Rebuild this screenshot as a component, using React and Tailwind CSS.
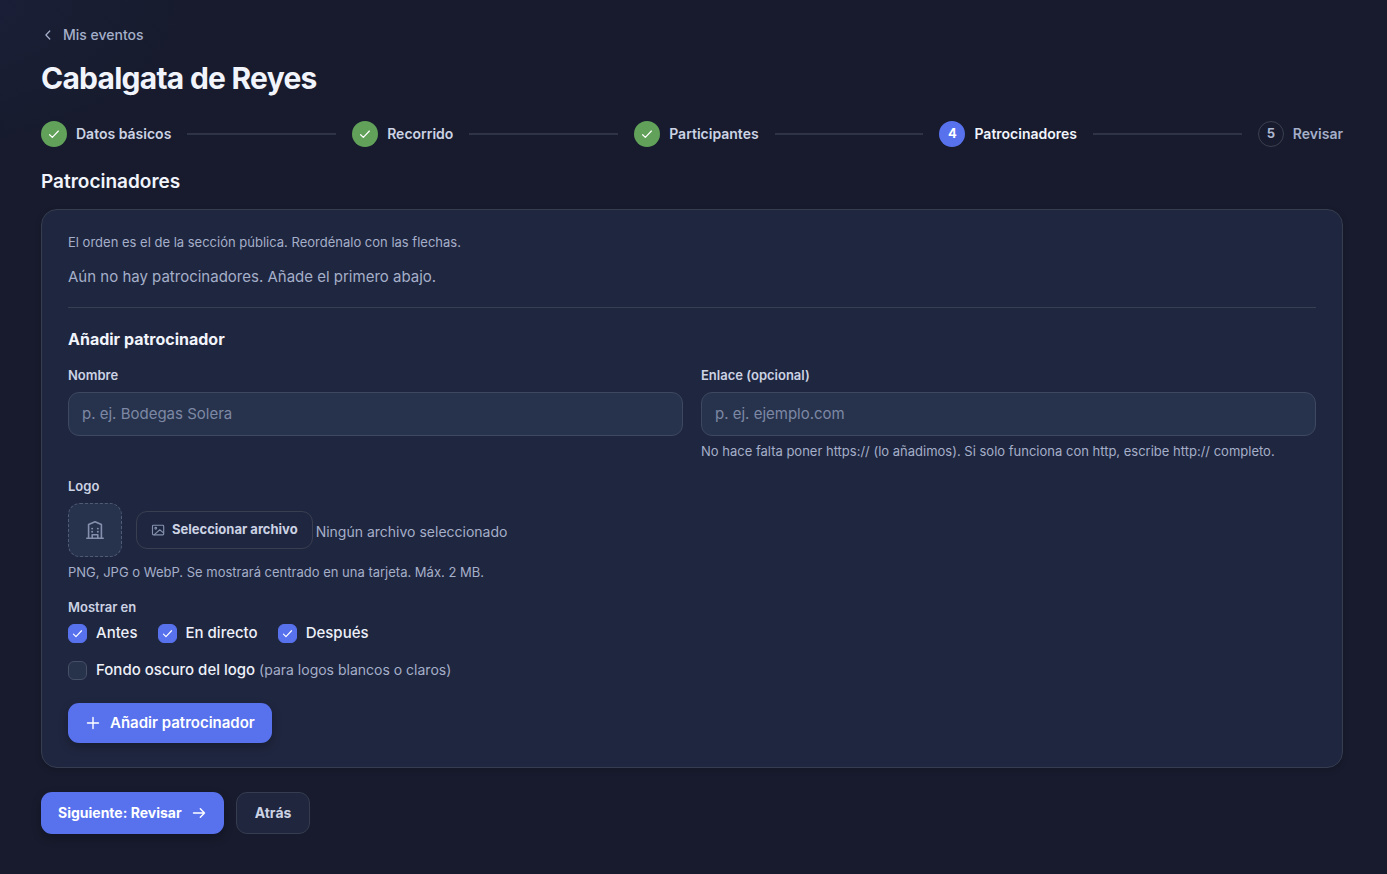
const STEPS = [
  { label: "Datos básicos", state: "done" },
  { label: "Recorrido", state: "done" },
  { label: "Participantes", state: "done" },
  { label: "Patrocinadores", state: "current" },
  { label: "Revisar", state: "pending" },
];

const CIRCLE = {
  done: "bg-[#61a159] text-white",
  current: "bg-[#5872ee] text-white",
  pending: "border border-[#3b4050] text-[#adb6cf]",
};

const STEP_TEXT = {
  done: "text-[#ccd3e4]",
  current: "text-[#f1f4fb]",
  pending: "text-[#a5afc9]",
};

function Icon({ children, className }) {
  return (
    <svg
      viewBox="0 0 16 16"
      className={className}
      fill="none"
      stroke="currentColor"
      strokeWidth="1.4"
      strokeLinecap="round"
      strokeLinejoin="round"
      aria-hidden="true"
    >
      {children}
    </svg>
  );
}

const CheckIcon = ({ className }) => (
  <Icon className={className}>
    <path d="M3 8.8l3.1 3.1L13 4.6" />
  </Icon>
);

const CaretLeftIcon = ({ className }) => (
  <Icon className={className}>
    <path d="M10 3.4L5.6 8l4.4 4.6" />
  </Icon>
);

const PlusIcon = ({ className }) => (
  <Icon className={className}>
    <path d="M8 2.5v11M2.5 8h11" />
  </Icon>
);

const ArrowRightIcon = ({ className }) => (
  <Icon className={className}>
    <path d="M2.5 8h11M9.3 3.7L13.5 8l-4.2 4.3" />
  </Icon>
);

const ImageIcon = ({ className }) => (
  <Icon className={className}>
    <rect x="1.7" y="2.6" width="12.8" height="11" rx="1" strokeWidth="1.3" />
    <circle cx="5.4" cy="6" r="1" strokeWidth="1.2" />
    <path d="M3.8 13.3l6.2-5.6 4.3 3.6" strokeWidth="1.3" />
  </Icon>
);

function BuildingIcon() {
  return (
    <svg
      viewBox="0 0 22 22"
      className="size-[22px]"
      fill="none"
      stroke="currentColor"
      strokeWidth="1.6"
      strokeLinecap="round"
      strokeLinejoin="round"
      aria-hidden="true"
    >
      <path d="M2.8 19.3h16.4M4.6 19.3V5.6L11 2.7l6.4 2.9v13.7M8.2 19v-3.2h5.6V19" />
      <path d="M8.1 9.6h.1M13.8 9.6h.1M8.1 12.8h.1M13.8 12.8h.1" strokeWidth="1.9" />
    </svg>
  );
}

function Stepper() {
  return (
    <ol className="mt-6 flex items-center gap-4">
      {STEPS.map((step, i) => (
        <li
          key={step.label}
          className={i < STEPS.length - 1 ? "flex flex-auto items-center gap-4" : "flex items-center"}
          aria-current={step.state === "current" ? "step" : undefined}
        >
          <span className="flex items-center gap-[9px]">
            <span
              className={`flex size-[26px] shrink-0 items-center justify-center rounded-full text-[13px] font-bold ${CIRCLE[step.state]}`}
            >
              {step.state === "done" ? <CheckIcon className="size-[14px]" /> : i + 1}
            </span>
            <span className={`text-sm font-semibold whitespace-nowrap ${STEP_TEXT[step.state]}`}>{step.label}</span>
          </span>
          {i < STEPS.length - 1 && <span className="h-[2px] flex-1 bg-[#2e3446]" />}
        </li>
      ))}
    </ol>
  );
}

function Field({ id, label, placeholder, help }) {
  return (
    <div>
      <label htmlFor={id} className="block text-[13px] leading-[17px] font-semibold text-[#ccd3e4]">
        {label}
      </label>
      <input
        id={id}
        type="text"
        placeholder={placeholder}
        aria-describedby={help ? `${id}-help` : undefined}
        className="mt-2 block h-11 w-full rounded-[11px] border border-[#3e485f] bg-[#27334d] px-[13px] pb-0.5 text-[15px] text-[#f1f4fb] outline-none placeholder:text-[#7d88a4] placeholder:opacity-100 focus:border-[#5872ee]"
      />
      {help && (
        <p id={`${id}-help`} className="mt-1.5 text-[13px] leading-[18px] text-[#a5afc9]">
          {help}
        </p>
      )}
    </div>
  );
}

function Check({ label, note, defaultChecked }) {
  return (
    <label className="flex h-[19px] items-center gap-[9px] text-[15px] font-medium text-[#eef1f9]">
      <span className="grid size-[19px] shrink-0">
        <input
          type="checkbox"
          defaultChecked={defaultChecked}
          className="peer col-start-1 row-start-1 size-[19px] appearance-none rounded-md border border-[#464f65] bg-[#27334b] checked:border-[#5872ee] checked:bg-[#5872ee]"
        />
        <CheckIcon className="pointer-events-none col-start-1 row-start-1 hidden size-[13px] place-self-center text-white peer-checked:block" />
      </span>
      <span>
        {label}
        {note && <span className="text-sm font-normal text-[#a5afc9]"> {note}</span>}
      </span>
    </label>
  );
}

export default function App() {
  return (
    <div className="min-h-screen bg-[#171b2d] bg-[radial-gradient(ellipse_at_-4%_0%,#1a2039_0%,#171b2d_12%)] pt-[25px] pr-11 pb-10 pl-[41px] font-['Inter',sans-serif] text-[#f1f4fb]">
      <a href="#eventos" className="flex w-fit items-center gap-2 text-sm leading-5 font-medium text-[#a5afc9]">
        <CaretLeftIcon className="size-[14px]" />
        Mis eventos
      </a>
      <h1 className="mt-[15px] text-[30px] leading-[37px] font-bold tracking-tight">Cabalgata de Reyes</h1>

      <Stepper />

      <h2 className="mt-6 text-[19px] leading-[22px] font-semibold">Patrocinadores</h2>

      <section className="mt-4 rounded-2xl border border-[#363d50] bg-[#1f263f] px-[26px] py-6 shadow-[0_2px_6px_rgba(0,0,0,0.15)]">
        <p className="text-[13px] leading-4 text-[#a5afc9]">
          El orden es el de la sección pública. Reordénalo con las flechas.
        </p>
        <p className="mt-4 text-[15px] leading-[22px] text-[#a5afc9]">
          Aún no hay patrocinadores. Añade el primero abajo.
        </p>

        <form className="mt-[19px] border-t border-[#373f52] pt-5" onSubmit={(e) => e.preventDefault()}>
          <h3 className="text-base leading-[22px] font-bold">Añadir patrocinador</h3>

          <div className="mt-[17px] grid grid-cols-2 gap-[18px]">
            <Field id="nombre" label="Nombre" placeholder="p. ej. Bodegas Solera" />
            <Field
              id="enlace"
              label="Enlace (opcional)"
              placeholder="p. ej. ejemplo.com"
              help="No hace falta poner https:// (lo añadimos). Si solo funciona con http, escribe http:// completo."
            />
          </div>

          <div className="mt-[17px]">
            <p className="text-[13px] leading-[18px] font-semibold text-[#ccd3e4]">Logo</p>
            <div className="mt-2 flex items-center gap-[14px]">
              <div className="flex size-[54px] items-center justify-center rounded-xl border border-dashed border-[#515b74] bg-[#27334d] text-[#8490ad]">
                <BuildingIcon />
              </div>
              <div className="flex items-center gap-[3px]">
                <input id="logo" type="file" accept="image/png,image/jpeg,image/webp" className="peer sr-only" />
                <label
                  htmlFor="logo"
                  className="flex h-[38px] cursor-pointer items-center gap-[7px] rounded-[11px] border border-[#393f50] px-[14px] text-[13px] font-bold text-[#ccd3e4]"
                >
                  <ImageIcon className="size-[14px] text-[#8490ad]" />
                  Seleccionar archivo
                </label>
                <span className="pt-1 text-sm text-[#a5afc9]">Ningún archivo seleccionado</span>
              </div>
            </div>
            <p className="mt-1.5 text-[13px] leading-[18px] text-[#a5afc9]">
              PNG, JPG o WebP. Se mostrará centrado en una tarjeta. Máx. 2 MB.
            </p>
          </div>

          <fieldset className="mt-[17px]">
            <legend className="text-[13px] leading-[18px] font-semibold text-[#ccd3e4]">Mostrar en</legend>
            <div className="mt-2 flex gap-5">
              <Check label="Antes" defaultChecked />
              <Check label="En directo" defaultChecked />
              <Check label="Después" defaultChecked />
            </div>
          </fieldset>

          <div className="mt-[18px] flex">
            <Check label="Fondo oscuro del logo" note="(para logos blancos o claros)" />
          </div>

          <button
            type="submit"
            className="mt-[23px] flex h-10 items-center gap-[9px] rounded-[11px] bg-[#5872ee] px-[17px] text-[15px] font-semibold text-white shadow-[0_4px_10px_rgba(0,0,0,0.25)]"
          >
            <PlusIcon className="size-4" />
            Añadir patrocinador
          </button>
        </form>
      </section>

      <div className="mt-6 flex gap-3">
        <button
          type="button"
          className="flex h-[42px] items-center gap-[9px] rounded-[11px] bg-[#5872ee] px-[17px] text-sm font-bold text-white shadow-[0_4px_10px_rgba(0,0,0,0.25)]"
        >
          Siguiente: Revisar
          <ArrowRightIcon className="size-4" />
        </button>
        <button
          type="button"
          className="h-[42px] rounded-[11px] border border-[#363d50] bg-[#1f263d] px-[18px] text-sm font-bold text-[#ccd3e4]"
        >
          Atrás
        </button>
      </div>
    </div>
  );
}
